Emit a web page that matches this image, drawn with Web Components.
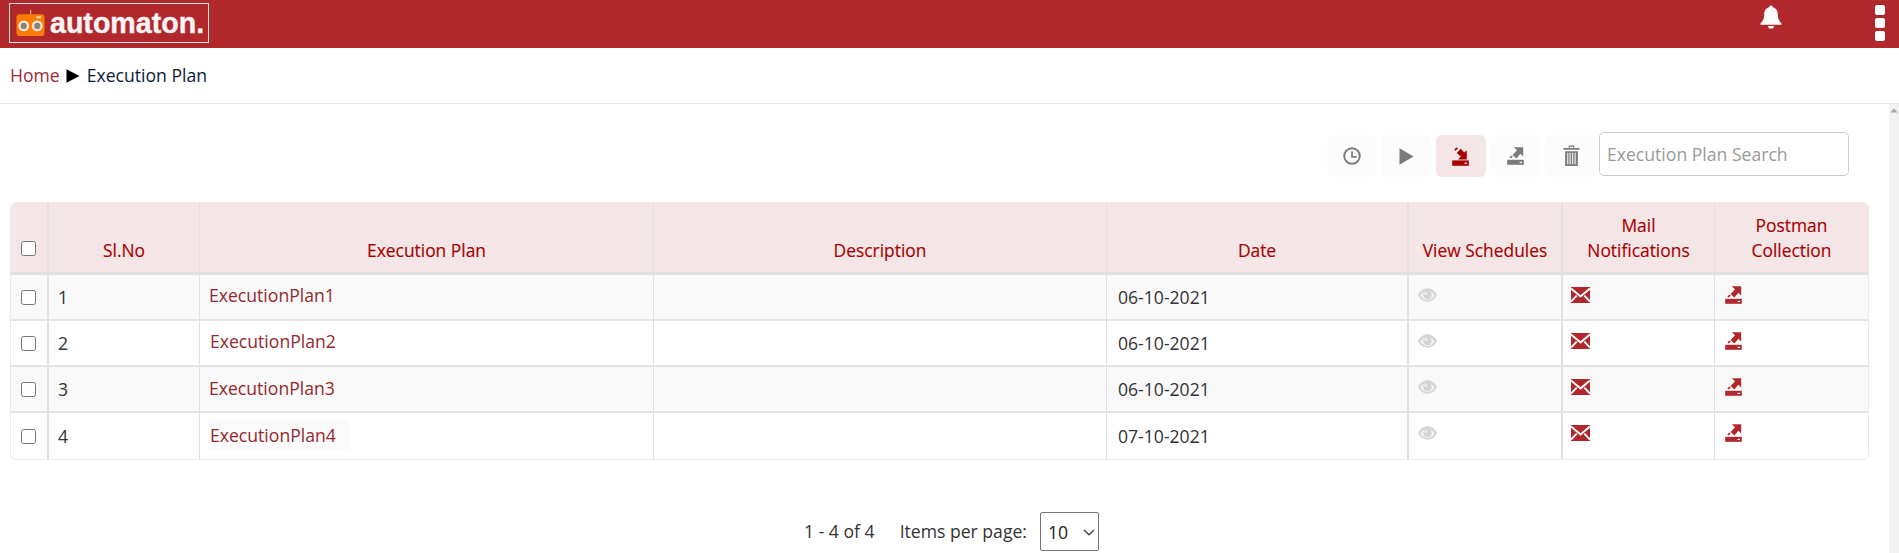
<!DOCTYPE html>
<html><head><meta charset="utf-8"><title>Execution Plan</title>
<style>
html,body{margin:0;padding:0;height:553px;overflow:hidden;background:#fff;font-family:"Open Sans",sans-serif}
app-page{display:block}
</style></head><body>
<app-page></app-page>
<script>
const ICONS={
 clock:(c)=>`<svg width="18" height="18" viewBox="0 0 18 18"><circle cx="9" cy="9" r="7.800" fill="none" stroke="${c}" stroke-width="1.900"/><path d="M9 4.200V9.800H13.600" fill="none" stroke="${c}" stroke-width="1.700"/></svg>`,
 play:(c)=>`<svg width="15" height="17" viewBox="0 0 15 17"><path d="M0.500 0.200L14.500 8.500L0.500 16.800Z" fill="${c}"/></svg>`,
 imp:(c)=>`<svg width="17" height="19" viewBox="0 0 17 19"><path d="M0.200 13.400H16.800V18.800H0.200Z" fill="${c}"/><rect x="12.600" y="15.600" width="2.400" height="1.200" fill="#fff"/><path d="M14.800 3.400V12.400H6L8.800 9.600L4.800 6L8.800 1.800L12.200 5.600Z" fill="${c}"/><path d="M2.200 2.400L4.800 0.200L6 1.400L3.400 3.800Z" fill="${c}"/></svg>`,
 exp:(c)=>`<svg width="17" height="18" viewBox="0 0 17 18"><path d="M0.200 12.800H16.800V17.800H0.200Z" fill="${c}"/><rect x="12.600" y="14.800" width="2.400" height="1.200" fill="#fff"/><path d="M6.800 0.300H16.200V9.400L13.400 6.800L9.400 11.600L5.600 8L10 3.200Z" fill="${c}"/><path d="M2.400 10.200L4.600 8.400L5.800 9.800L3.600 11.600Z" fill="${c}"/></svg>`,
 trash:(c)=>`<svg width="17" height="23" viewBox="0 0 16 21"><path d="M0.500 3.400H15.500V5H0.500Z M5.400 3.200V1H10.600V3.200H9.400V2.200H6.600V3.200Z" fill="${c}"/><path d="M2 6.400H14V20.400H2Z M4 8V18.800H5V8Z M6.200 8V18.800H7.200V8Z M8.600 8V18.800H9.600V8Z M10.900 8V18.800H11.900V8Z" fill="${c}" fill-rule="evenodd"/></svg>`,
 eye:(c)=>`<svg width="19" height="14" viewBox="0 0 19 14"><path d="M0 7C2.500 2.400 5.800 0.300 9.500 0.300S16.500 2.400 19 7C16.500 11.600 13.200 13.700 9.500 13.700S2.500 11.600 0 7Z" fill="${c}"/><path d="M2.400 7.400C4.200 10.200 6.600 12 9.500 12S14.800 10.200 16.600 7.400C15 4.600 12.500 3 9.500 3S4 4.600 2.400 7.400Z" fill="#f4f4f4"/><circle cx="9.500" cy="7" r="4.200" fill="${c}"/><circle cx="7.800" cy="5.600" r="1.300" fill="#f4f4f4"/></svg>`,
 mail:(c)=>`<svg width="19" height="16" viewBox="0 0 18 16" preserveAspectRatio="none"><path d="M0 0H18V16H0Z" fill="${c}"/><path d="M0 1.500L9 9.500L18 1.500" fill="none" stroke="#fff" stroke-width="2"/><path d="M0 14.600L5.400 8.600M18 14.600L12.600 8.600" fill="none" stroke="#fff" stroke-width="1.800"/></svg>`
};
class AppIcon extends HTMLElement{
 connectedCallback(){const r=this.shadowRoot||this.attachShadow({mode:'open'});
  r.innerHTML=`<style>:host{display:inline-flex;align-items:center;justify-content:center;line-height:0}</style>`+ICONS[this.getAttribute('name')](this.getAttribute('color')||'#b0282c');}
}
customElements.define('app-icon',AppIcon);

class AppHeader extends HTMLElement{
 constructor(){super();this.attachShadow({mode:'open'}).innerHTML=`<style>
 :host{display:flex;align-items:flex-start;height:48px;background:#b0282c;color:#fff;box-sizing:border-box}
 .logo{margin:3px 0 0 9px;width:200px;height:40px;box-sizing:border-box;border:1px solid #f4dede;display:flex;align-items:center;padding-left:6px;gap:5px}
 .logo svg{flex:none}
 .txt{font:700 28.600px/1 "Liberation Sans",sans-serif;color:#fbf4f4;margin-top:1px;white-space:nowrap;-webkit-text-stroke:.4px #fbf4f4}
 .sp{flex:1}
 .bell{margin:5px 0 0 0;line-height:0}
 .dots{margin:5px 14px 0 93px;width:10px;display:flex;flex-direction:column;gap:3px}
 .dots i{display:block;width:10px;height:10px;background:#fff;border-radius:2px}
 </style>
 <div class="logo"><svg width="29" height="28" viewBox="0 0 30 28"><path d="M14.500 0.500h1.200v5h-1.200z" fill="#f0b070"/><rect x="0.500" y="5" width="29" height="22.500" rx="3.500" fill="#f97c06"/><rect x="21" y="7.200" width="5" height="1.800" fill="#ffe0b8"/><circle cx="8" cy="17" r="5.600" fill="#f7e7d6"/><circle cx="8" cy="17" r="3.200" fill="#8a8078"/><circle cx="22" cy="17" r="5.600" fill="#f7e7d6"/><circle cx="22" cy="17" r="3.200" fill="#8a8078"/></svg><span class="txt">automaton.</span></div>
 <div class="sp"></div>
 <div class="bell"><svg width="22" height="24" viewBox="0 0 22 24"><path d="M11 0.500c1 0 1.600.7 1.600 1.700 3.600.7 5.200 3.600 5.200 7.200 0 4.600 1.600 6.400 3.700 9v1.400H.5v-1.400c2.100-2.600 3.700-4.400 3.700-9 0-3.600 1.600-6.500 5.200-7.200C9.400 1.200 10 .5 11 .5z" fill="#fff"/><path d="M8.200 21h5.600a2.800 2.800 0 0 1-5.600 0z" fill="#fff"/></svg></div>
 <div class="dots"><i></i><i></i><i></i></div>`;}
}
customElements.define('app-header',AppHeader);

class AppBreadcrumb extends HTMLElement{
 constructor(){super();this.attachShadow({mode:'open'}).innerHTML=`<style>
 :host{display:flex;align-items:center;height:56px;box-sizing:border-box;border-bottom:1px solid #e6e6e6;padding:0 0 2px 10px;font:17.600px "Open Sans",sans-serif;color:#0b1a3c}
 a{color:#9c2a30;text-decoration:none}
 svg{margin:2px 7px 0 6px}
 </style><a>Home</a><svg width="14" height="14" viewBox="0 0 14 14"><path d="M0.500 0.300L13.500 7L0.500 13.700Z" fill="#000"/></svg><span><slot></slot></span>`;}
}
customElements.define('app-breadcrumb',AppBreadcrumb);

class ToolButton extends HTMLElement{
 constructor(){super();this.attachShadow({mode:'open'}).innerHTML=`<style>
 :host{display:flex;align-items:center;justify-content:center;width:50px;height:42px;background:#fcfcfc;border-radius:6px}
 :host([active]){background:#f4e6e6}
 ::slotted([name="trash"]){margin:-2px 0 0 2px}
 ::slotted([name="play"]){margin-left:1px}
 </style><slot></slot>`;}
}
customElements.define('tool-button',ToolButton);

class PlanToolbar extends HTMLElement{
 constructor(){super();this.attachShadow({mode:'open'}).innerHTML=`<style>
 :host{display:flex;justify-content:flex-end;align-items:flex-start;height:98px;box-sizing:border-box;padding:28px 20px 0 0}
 .b{display:flex;gap:4.600px;margin-top:3px;margin-right:4px}
 input{box-sizing:border-box;width:250px;height:44px;border:1px solid #ccc;border-radius:5px;padding:0 7px;font:17.600px "Open Sans",sans-serif;color:#333;outline:0;background:#fff}
 input::placeholder{color:#9a9a9a;opacity:1}
 </style><div class="b"><slot></slot></div><input placeholder="Execution Plan Search">`;}
}
customElements.define('plan-toolbar',PlanToolbar);

const COLS='36px 2px 150px 1px 453px 1px 452px 1px 300px 2px 152px 2px 151px 1px 1fr';
class PlanTable extends HTMLElement{
 constructor(){super();
  const rows=[['1','ExecutionPlan1','06-10-2021'],['2','ExecutionPlan2','06-10-2021'],['3','ExecutionPlan3','06-10-2021'],['4','ExecutionPlan4','07-10-2021']];
  let h=`<div class="row head">
   <div class="c chk"><input type="checkbox"></div><i class="s2"></i>
   <div class="c th">Sl.No</div><i class="s1"></i>
   <div class="c th">Execution Plan</div><i class="s1"></i>
   <div class="c th">Description</div><i class="s1"></i>
   <div class="c th">Date</div><i class="s2"></i>
   <div class="c th">View Schedules</div><i class="s2"></i>
   <div class="c th">Mail<br>Notifications</div><i class="s1"></i>
   <div class="c th">Postman<br>Collection</div></div>`;
  rows.forEach((r,i)=>{h+=`<div class="row ${i%2?'':'odd'} ${i==3?'last':''}">
   <div class="c chk b"><input type="checkbox"></div><i class="s2"></i>
   <div class="c td num">${r[0]}</div><i class="s1"></i>
   <div class="c td"><a class="${i==3?'chip':(i%2?'':'left')}" style="top:${i<2?-2:-1}px">${r[1]}</a></div><i class="s1"></i>
   <div class="c td"></div><i class="s1"></i>
   <div class="c td date">${r[2]}</div><i class="s2"></i>
   <div class="c td ic eye"><app-icon name="eye" color="#d4d4d4"></app-icon></div><i class="s2"></i>
   <div class="c td ic mail"><app-icon name="mail"></app-icon></div><i class="s1"></i>
   <div class="c td ic exp"><app-icon name="exp"></app-icon></div></div>`;});
  this.attachShadow({mode:'open'}).innerHTML=`<style>
  :host{display:block;box-sizing:border-box;border:1px solid #f4e6e6;border-radius:6px;overflow:hidden;font:17.600px "Open Sans",sans-serif;color:#333}
  .row{display:grid;grid-template-columns:${COLS};height:46px;border-bottom:2px solid #e4e4e4;box-sizing:border-box;background:#fff}
  .odd{background:#f9f9f9}
  .last{border-bottom:0}
  .head{height:72px;background:#f4e6e6;border-bottom:3px solid #e0e0e0}
  i{display:block;background:#e0e0e0}
  .c{display:flex;align-items:center;min-width:0}
  .chk{justify-content:center}
  .head .chk{align-items:flex-end;padding-bottom:16px;box-sizing:border-box}
  input{width:15px;height:15px;margin:0 0 0 -1px}
  .th{justify-content:center;align-items:flex-end;text-align:center;color:#a80000;font-weight:500;font-size:17.400px;line-height:25px;padding-bottom:9px;box-sizing:border-box;white-space:nowrap;-webkit-text-stroke:.15px #a80000}
  .td{padding-left:10px;box-sizing:border-box}
  .num{padding-left:9px}
  .date{padding-left:11px}
  a{color:#96282d;position:relative}
  .left{margin-left:-1px}
  .chip{background:#fafafa;padding:3px 13px 3px 1px;margin:-3px 0 -3px -1px}
  .ic{align-items:flex-start}
  .eye{padding:13px 0 0 9px}
  .mail{padding:12px 0 0 8px}
  .exp{padding:11px 0 0 10px}
  </style>`+h;}
}
customElements.define('plan-table',PlanTable);

class PlanPaginator extends HTMLElement{
 constructor(){super();this.attachShadow({mode:'open'}).innerHTML=`<style>
 :host{display:flex;align-items:center;height:41px;margin-top:51px;padding-left:794px;font:17.600px "Open Sans",sans-serif;color:#333}
 span.t{margin-bottom:2px}
 .items{margin-left:25px;margin-right:13px}
 .sel{position:relative;display:inline-flex}
 select{appearance:none;-webkit-appearance:none;width:59px;height:39px;border:1px solid #767676;border-radius:2px;background:#fff;font:17.600px "Open Sans",sans-serif;color:#222;padding-left:7px;outline:0}
 svg{position:absolute;right:4px;top:17px;pointer-events:none}
 </style><span class="t">1 - 4 of 4</span><span class="t items">Items per page:</span><span class="sel"><select><option>10</option></select><svg width="12" height="7" viewBox="0 0 12 7"><path d="M1 1L6 5.800L11 1" fill="none" stroke="#444" stroke-width="1.500"/></svg></span>`;}
}
customElements.define('plan-paginator',PlanPaginator);

class AppScrollbar extends HTMLElement{
 constructor(){super();this.attachShadow({mode:'open'}).innerHTML=`<style>
 :host{display:block;width:10px;background:#f1f1f1;flex:none}
 svg{display:block;margin:4px auto 0}
 </style><svg width="8" height="5" viewBox="0 0 8 5"><path d="M4 0.500L7.500 4.500H0.500Z" fill="#a3a3a3"/></svg>`;}
}
customElements.define('app-scrollbar',AppScrollbar);

class AppPage extends HTMLElement{
 constructor(){super();this.attachShadow({mode:'open'}).innerHTML=`<style>
 :host{display:block;width:1899px;height:553px;overflow:hidden}
 .body{display:flex;height:449px}
 .main{flex:1;min-width:0;padding:0 20px 0 10px;box-sizing:border-box}
 </style>
 <app-header></app-header>
 <app-breadcrumb>Execution Plan</app-breadcrumb>
 <div class="body"><div class="main">
  <plan-toolbar>
   <tool-button><app-icon name="clock" color="#7b7b7b"></app-icon></tool-button>
   <tool-button><app-icon name="play" color="#7b7b7b"></app-icon></tool-button>
   <tool-button active><app-icon name="imp" color="#ab0000"></app-icon></tool-button>
   <tool-button><app-icon name="exp" color="#7b7b7b"></app-icon></tool-button>
   <tool-button><app-icon name="trash" color="#7b7b7b"></app-icon></tool-button>
  </plan-toolbar>
  <plan-table></plan-table>
  <plan-paginator></plan-paginator>
 </div><app-scrollbar></app-scrollbar></div>`;}
}
customElements.define('app-page',AppPage);
</script></body></html>
